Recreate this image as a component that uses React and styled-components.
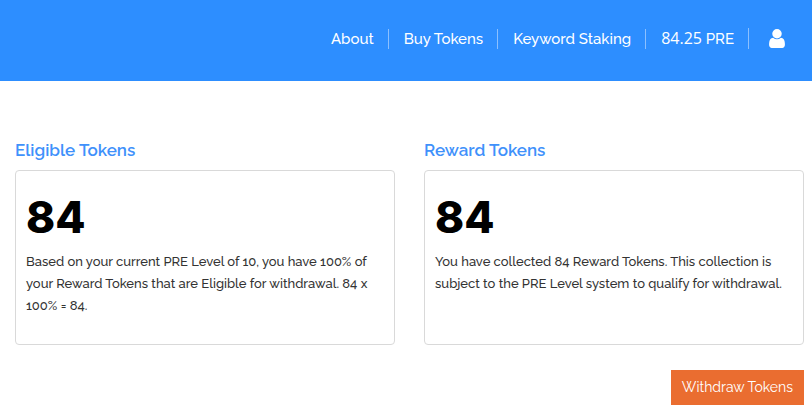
import React from 'react';
import styled, { createGlobalStyle } from 'styled-components';

const GlobalStyle = createGlobalStyle`
  * {
    box-sizing: border-box;
  }

  body {
    margin: 0;
    background: #fff;
    color: #333;
    font-family: Raleway, Lato, sans-serif;
    font-size: 14px;
    font-weight: 400;
    line-height: 22px;
  }
`;

const Header = styled.header`
  display: flex;
  justify-content: flex-end;
  padding: 28px 27px 32px 15px;
  background: #2d8eff;
`;

const Nav = styled.nav`
  display: flex;
  align-items: center;
  gap: 1px;
`;

const NavLink = styled.a`
  padding: 0 14px;
  border-right: 1px solid #8cc0ff;
  color: #fff;
  font-size: 15px;
  font-weight: 500;
  line-height: 20px;
  text-decoration: none;
  white-space: nowrap;
`;

const Balance = styled.span`
  font-family: 'Open Sans', sans-serif;
  font-size: 16px;
  font-weight: 500;
`;

const AccountLink = styled.a`
  display: flex;
  margin-left: 19px;
  color: #fff;
`;

const Main = styled.main`
  padding: 58px 8px 9px 15px;
`;

const Panels = styled.div`
  display: grid;
  grid-template-columns: 1fr 1fr;
  column-gap: 29px;
`;

const Panel = styled.section`
  display: flex;
  flex-direction: column;
`;

const PanelTitle = styled.h2`
  margin: 0 0 9px;
  color: #3f91fb;
  font-size: 17px;
  font-weight: 600;
  line-height: 22px;
`;

const Card = styled.div`
  flex: 1;
  padding: 19px 10px 27px;
  border: 1px solid #d9d9d9;
  border-radius: 4px;
`;

const Amount = styled.strong`
  display: block;
  margin-bottom: 7px;
  color: #000;
  font-family: Inter, sans-serif;
  font-size: 44px;
  font-weight: 800;
  line-height: 54px;
`;

const Text = styled.p`
  margin: 0;
  font-size: 13px;
  font-weight: 500;
`;

const Actions = styled.div`
  display: flex;
  justify-content: flex-end;
  margin-top: 25px;
`;

const Button = styled.button`
  padding: 6px 11px 7px;
  border: 0;
  background: #ea6d30;
  color: #fff;
  font: inherit;
  cursor: pointer;
`;

function UserIcon() {
  return (
    <svg width='16' height='19' viewBox='0 128 1280 1536' fill='currentColor' aria-hidden='true'>
      <path d='M1280 1399q0 109-62.5 187t-150.5 78h-854q-88 0-150.5-78t-62.5-187q0-85 8.5-160.5t31.5-152 58.5-131 94-89 134.5-34.5q131 128 313 128t313-128q76 0 134.5 34.5t94 89 58.5 131 31.5 152 8.5 160.5zm-256-887q0 159-112.5 271.5t-271.5 112.5-271.5-112.5-112.5-271.5 112.5-271.5 271.5-112.5 271.5 112.5 112.5 271.5z' />
    </svg>
  );
}

function TokenPanel({ title, amount, children }) {
  return (
    <Panel>
      <PanelTitle>{title}</PanelTitle>
      <Card>
        <Amount>{amount}</Amount>
        <Text>{children}</Text>
      </Card>
    </Panel>
  );
}

export default function App() {
  return (
    <>
      <GlobalStyle />
      <Header>
        <Nav>
          <NavLink href='#about'>About</NavLink>
          <NavLink href='#buy'>Buy Tokens</NavLink>
          <NavLink href='#staking'>Keyword Staking</NavLink>
          <NavLink href='#balance'>
            <Balance>84.25</Balance> PRE
          </NavLink>
          <AccountLink href='#account' aria-label='Account'>
            <UserIcon />
          </AccountLink>
        </Nav>
      </Header>
      <Main>
        <Panels>
          <TokenPanel title='Eligible Tokens' amount='84'>
            Based on your current PRE Level of 10, you have 100% of your Reward Tokens that are
            Eligible for withdrawal. 84 x 100% = 84.
          </TokenPanel>
          <TokenPanel title='Reward Tokens' amount='84'>
            You have collected 84 Reward Tokens. This collection is subject to the PRE Level system
            to qualify for withdrawal.
          </TokenPanel>
        </Panels>
        <Actions>
          <Button type='button'>Withdraw Tokens</Button>
        </Actions>
      </Main>
    </>
  );
}
